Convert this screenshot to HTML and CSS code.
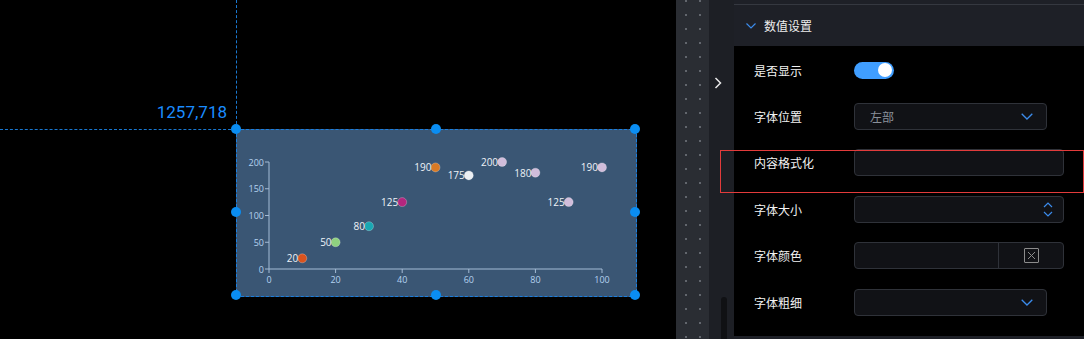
FILE: index.html
```html
<!DOCTYPE html>
<html lang="zh-CN">
<head>
    <meta charset="UTF-8">
    <meta name="viewport" content="width=device-width, initial-scale=1.0">
    <title>数值设置</title>
    <link rel="stylesheet" href="styles.css">
</head>
<body>
    <div class="app">
        <!-- editing canvas -->
        <div class="canvas">
            <div class="guide guide-v"></div>
            <div class="guide guide-h"></div>
            <div class="coord">1257,718</div>

            <div class="widget">
                <svg class="chart" viewBox="0 0 399 166" width="399" height="166">
                    <g class="axis">
                        <line x1="33" y1="33" x2="33" y2="140"></line>
                        <line x1="33" y1="140" x2="366" y2="140"></line>
                        <line x1="29" y1="33" x2="33" y2="33"></line>
                        <line x1="29" y1="59.75" x2="33" y2="59.75"></line>
                        <line x1="29" y1="86.5" x2="33" y2="86.5"></line>
                        <line x1="29" y1="113.25" x2="33" y2="113.25"></line>
                        <line x1="29" y1="140" x2="33" y2="140"></line>
                        <line x1="33" y1="140" x2="33" y2="144"></line>
                        <line x1="99.6" y1="140" x2="99.6" y2="144"></line>
                        <line x1="166.2" y1="140" x2="166.2" y2="144"></line>
                        <line x1="232.8" y1="140" x2="232.8" y2="144"></line>
                        <line x1="299.4" y1="140" x2="299.4" y2="144"></line>
                        <line x1="366" y1="140" x2="366" y2="144"></line>
                    </g>
                    <g class="tick-y">
                        <text x="28" y="33">200</text>
                        <text x="28" y="59.75">150</text>
                        <text x="28" y="86.5">100</text>
                        <text x="28" y="113.25">50</text>
                        <text x="28" y="140">0</text>
                    </g>
                    <g class="tick-x">
                        <text x="33" y="150">0</text>
                        <text x="99.6" y="150">20</text>
                        <text x="166.2" y="150">40</text>
                        <text x="232.8" y="150">60</text>
                        <text x="299.4" y="150">80</text>
                        <text x="366" y="150">100</text>
                    </g>
                    <g class="dots">
                        <circle cx="66.3" cy="129.3" r="4.5" fill="#d9531e"></circle>
                        <circle cx="99.6" cy="113.25" r="4.5" fill="#8fd17f"></circle>
                        <circle cx="133" cy="97.2" r="4.5" fill="#19a7b3"></circle>
                        <circle cx="166.2" cy="73.1" r="4.5" fill="#b3267e"></circle>
                        <circle cx="199.5" cy="38.4" r="4.5" fill="#d97a24"></circle>
                        <circle cx="232.8" cy="46.4" r="4.5" fill="#eceff3"></circle>
                        <circle cx="266.1" cy="33" r="4.5" fill="#d1bddb"></circle>
                        <circle cx="299.4" cy="43.7" r="4.5" fill="#d1bddb"></circle>
                        <circle cx="332.7" cy="73.1" r="4.5" fill="#d1bddb"></circle>
                        <circle cx="366" cy="38.4" r="4.5" fill="#d1bddb"></circle>
                    </g>
                    <g class="values">
                        <text x="62.3" y="129.3">20</text>
                        <text x="95.6" y="113.25">50</text>
                        <text x="129" y="97.2">80</text>
                        <text x="162.2" y="73.1">125</text>
                        <text x="195.5" y="38.4">190</text>
                        <text x="228.8" y="46.4">175</text>
                        <text x="262.1" y="33">200</text>
                        <text x="295.4" y="43.7">180</text>
                        <text x="328.7" y="73.1">125</text>
                        <text x="362" y="38.4">190</text>
                    </g>
                </svg>
                <span class="handle h-tl"></span>
                <span class="handle h-tc"></span>
                <span class="handle h-tr"></span>
                <span class="handle h-ml"></span>
                <span class="handle h-mr"></span>
                <span class="handle h-bl"></span>
                <span class="handle h-bc"></span>
                <span class="handle h-br"></span>
            </div>
        </div>

        <div class="ruler"></div>

        <div class="gutter">
            <svg class="collapse" width="8" height="12" viewBox="0 0 8 12">
                <path d="M1.5 1 L6.5 6 L1.5 11" fill="none" stroke="#e8e8e8" stroke-width="1.5"></path>
            </svg>
            <div class="thumb"></div>
        </div>

        <!-- property panel -->
        <div class="panel">
            <div class="panel-head">
                <svg width="10" height="6" viewBox="0 0 10 6">
                    <path d="M0.5 0.5 L5 5 L9.5 0.5" fill="none" stroke="#3b8beb" stroke-width="1.2"></path>
                </svg>
                <span>数值设置</span>
            </div>
            <div class="panel-body">
                <div class="row">
                    <label class="label">是否显示</label>
                    <span class="switch"><span class="knob"></span></span>
                </div>
                <div class="row">
                    <label class="label">字体位置</label>
                    <div class="select">
                        <span class="value">左部</span>
                        <svg width="12" height="7" viewBox="0 0 12 7">
                            <path d="M0.7 0.7 L6 6 L11.3 0.7" fill="none" stroke="#3b8beb" stroke-width="1.3"></path>
                        </svg>
                    </div>
                </div>
                <div class="row">
                    <label class="label">内容格式化</label>
                    <div class="field"></div>
                </div>
                <div class="row">
                    <label class="label">字体大小</label>
                    <div class="field number">
                        <span class="spin">
                            <svg width="10" height="6" viewBox="0 0 10 6"><path d="M1 5 L5 1 L9 5" fill="none" stroke="#3b8beb" stroke-width="1.2"></path></svg>
                            <svg width="10" height="6" viewBox="0 0 10 6"><path d="M1 1 L5 5 L9 1" fill="none" stroke="#3b8beb" stroke-width="1.2"></path></svg>
                        </span>
                    </div>
                </div>
                <div class="row">
                    <label class="label">字体颜色</label>
                    <div class="field color">
                        <span class="color-text"></span>
                        <span class="color-pick">
                            <span class="swatch">
                                <svg width="9" height="9" viewBox="0 0 9 9"><path d="M1 1 L8 8 M8 1 L1 8" stroke="#8c8c8c" stroke-width="1"></path></svg>
                            </span>
                        </span>
                    </div>
                </div>
                <div class="row">
                    <label class="label">字体粗细</label>
                    <div class="select">
                        <span class="value"></span>
                        <svg width="12" height="7" viewBox="0 0 12 7">
                            <path d="M0.7 0.7 L6 6 L11.3 0.7" fill="none" stroke="#3b8beb" stroke-width="1.3"></path>
                        </svg>
                    </div>
                </div>
            </div>
            <div class="panel-foot"></div>
        </div>

        <div class="focus-box"></div>
    </div>
</body>
</html>
```

FILE: styles.css
```css
* {
    box-sizing: border-box;
}
body {
    margin: 0;
    background-color: #000;
    font-family: "Noto Sans CJK SC", "Noto Sans", sans-serif;
    overflow: hidden;
}
.app {
    position: relative;
    display: flex;
    width: 1084px;
    height: 339px;
}

/* canvas */
.canvas {
    position: relative;
    width: 676px;
    height: 100%;
    background-color: #000;
}
.guide {
    position: absolute;
}
.guide-v {
    left: 236px;
    top: 0;
    height: 129px;
    border-left: 1px dashed #1a78d0;
}
.guide-h {
    left: 0;
    top: 129px;
    width: 236px;
    border-top: 1px dashed #1a78d0;
}
.coord {
    position: absolute;
    left: 0;
    top: 102px;
    width: 227px;
    text-align: right;
    font-family: Roboto, "Open Sans", sans-serif;
    font-size: 17px;
    line-height: 20px;
    color: #1a8cff;
}
.widget {
    position: absolute;
    left: 236px;
    top: 129px;
    width: 401px;
    height: 168px;
    background-color: #3a5674;
    border: 1px dashed #1a7fe0;
}
.chart {
    position: absolute;
    left: -1px;
    top: -1px;
}
.axis line {
    stroke: #a4bcd6;
    stroke-width: 1;
}
.tick-y text, .tick-x text {
    font-family: "Open Sans", sans-serif;
    font-size: 9px;
    fill: #b4d2f0;
    dominant-baseline: central;
}
.tick-y text {
    text-anchor: end;
}
.tick-x text {
    text-anchor: middle;
}
.dots circle {
    stroke: rgba(255, 255, 255, 0.25);
    stroke-width: 1;
}
.values text {
    font-family: "Open Sans", sans-serif;
    font-size: 10px;
    fill: #eef2f7;
    text-anchor: end;
    dominant-baseline: central;
}
.handle {
    position: absolute;
    width: 10px;
    height: 10px;
    margin: -6px 0 0 -6px;
    border-radius: 50%;
    background-color: #0a8df2;
}
.h-tl { left: 0; top: 0; }
.h-tc { left: 50%; top: 0; }
.h-tr { left: 100%; top: 0; }
.h-ml { left: 0; top: 50%; }
.h-mr { left: 100%; top: 50%; }
.h-bl { left: 0; top: 100%; }
.h-bc { left: 50%; top: 100%; }
.h-br { left: 100%; top: 100%; }

/* dotted ruler strip */
.ruler {
    width: 33px;
    height: 100%;
    background-color: #2a2d33;
    background-image: radial-gradient(circle at 1px 1px, #62666d 1px, transparent 1.4px);
    background-size: 14px 14px;
    background-position: 9px 0;
}

.gutter {
    width: 25px;
    height: 100%;
    display: flex;
    flex-direction: column;
    background-color: #1d1f25;
}
.gutter .collapse {
    margin: 77px 0 0 5px;
}
.thumb {
    margin: auto 0 0 12px;
    width: 6px;
    height: 42px;
    border-radius: 3px 3px 0 0;
    background-color: #101114;
}

/* property panel */
.panel {
    flex: 1;
    display: flex;
    flex-direction: column;
    background-color: #1e2027;
}
.panel-head {
    margin-top: 4px;
    height: 42px;
    border-top: 1px solid #353840;
    display: flex;
    align-items: center;
    gap: 8px;
    padding-left: 12px;
    font-size: 12px;
    color: #eeeeee;
}
.panel-body {
    height: 290px;
    padding: 1px 0 0 20px;
    background-color: #000;
}
.panel-foot {
    flex: 1;
}
.row {
    display: flex;
    align-items: center;
    height: 46.4px;
}
.label {
    width: 100px;
    font-size: 12px;
    color: #f2f2f2;
}
.switch {
    position: relative;
    width: 40px;
    height: 17px;
    border-radius: 9px;
    background-color: #409eff;
}
.switch .knob {
    position: absolute;
    right: 2px;
    top: 1.5px;
    width: 14px;
    height: 14px;
    border-radius: 50%;
    background-color: #fff;
}
.select, .field {
    height: 27px;
    background-color: #111216;
    border: 1px solid #2f3239;
    border-radius: 4px;
}
.select {
    width: 193px;
    display: flex;
    align-items: center;
    justify-content: space-between;
    padding: 0 13px 0 15px;
}
.select .value {
    font-size: 12px;
    color: #8a909a;
}
.field {
    width: 210px;
}
.field.number {
    display: flex;
    justify-content: flex-end;
    align-items: center;
    padding-right: 10px;
}
.spin {
    display: flex;
    flex-direction: column;
    gap: 3px;
    margin-top: 1px;
}
.spin svg {
    display: block;
}
.field.color {
    display: flex;
}
.color-text {
    flex: 1;
    border-right: 1px solid #2f3239;
}
.color-pick {
    width: 64px;
    display: flex;
    align-items: center;
    justify-content: center;
}
.swatch {
    width: 15px;
    height: 15px;
    border: 1px solid #8c8c8c;
    border-radius: 1px;
    display: flex;
    align-items: center;
    justify-content: center;
}
.swatch svg {
    display: block;
}

/* highlight box over the form row */
.focus-box {
    position: absolute;
    left: 720px;
    top: 150px;
    width: 364px;
    height: 43px;
    border: 1px solid #e23b3b;
}
```
